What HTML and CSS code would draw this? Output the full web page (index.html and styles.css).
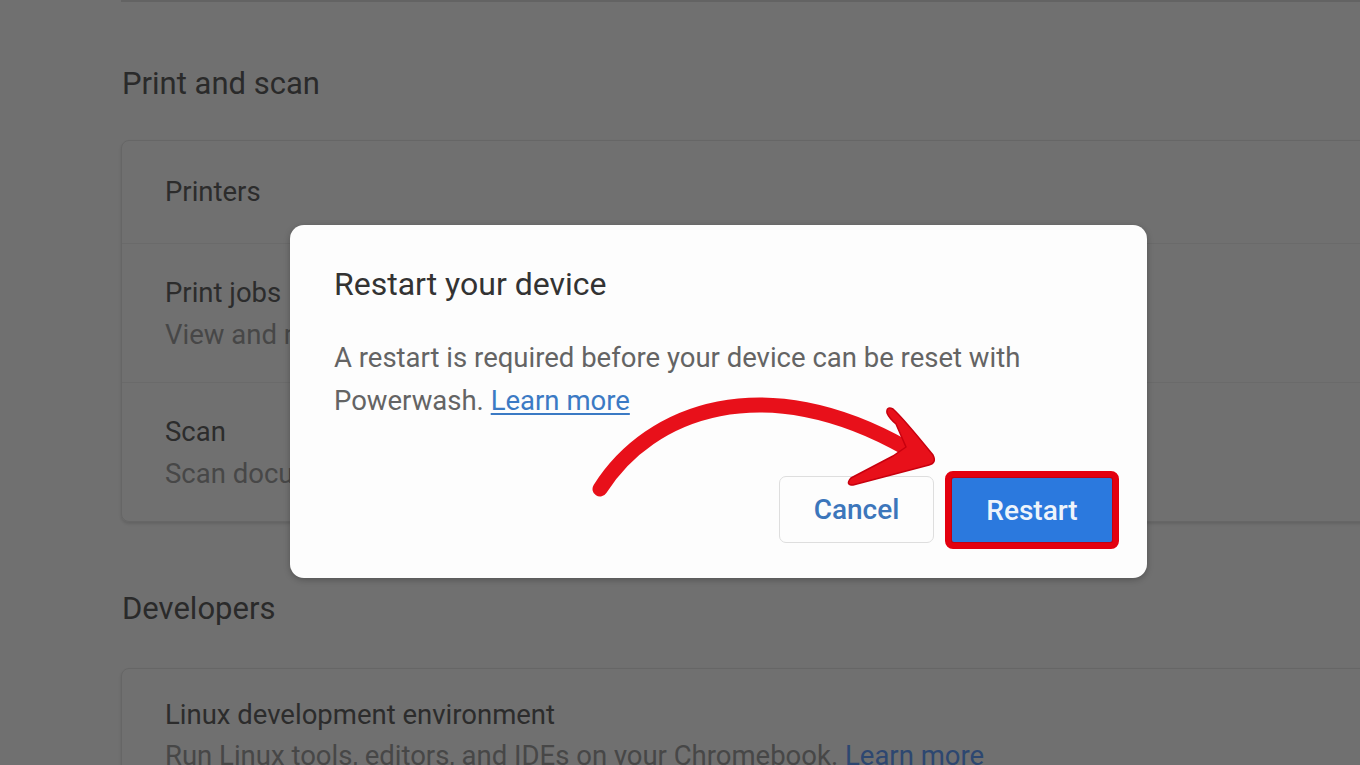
FILE: index.html
```html
<!DOCTYPE html>
<html lang="en">
<head>
<meta charset="utf-8">
<title>Restart your device</title>
<link rel="stylesheet" href="styles.css">
</head>
<body>
<main class="page">
  <div class="prev-card"></div>
  <h2 class="section-title title-print">Print and scan</h2>
  <section class="card">
    <div class="row row-first">
      <div class="row-label">Printers</div>
    </div>
    <div class="row">
      <div class="row-label">Print jobs</div>
      <div class="row-sub">View and manage print jobs</div>
    </div>
    <div class="row">
      <div class="row-label">Scan</div>
      <div class="row-sub">Scan documents and images</div>
    </div>
  </section>
  <h2 class="section-title title-dev">Developers</h2>
  <section class="card card-dev">
    <div class="row row-first">
      <div class="row-label">Linux development environment</div>
      <div class="row-sub">Run Linux tools, editors, and IDEs on your Chromebook. <span class="sub-link">Learn more</span></div>
    </div>
  </section>
</main>

<div class="dialog" role="dialog">
  <div class="dialog-title">Restart your device</div>
  <p class="dialog-body">A restart is required before your device can be reset with Powerwash. <a class="link" href="#">Learn more</a></p>
  <div class="dialog-actions">
    <button class="btn btn-cancel">Cancel</button>
    <span class="highlight"><button class="btn btn-primary">Restart</button></span>
  </div>
</div>

<svg class="arrow" width="1360" height="765" viewBox="0 0 1360 765">
  <path d="M600 489 C 650 410, 765 368, 906 448" fill="none" stroke="#e8101a" stroke-width="15" stroke-linecap="round"/>
  <path d="M887 413 Q 886 406 893 409 Q 903 418 933 455 Q 937 463 929 465 L 853 485 Q 845 485 851 478 L 893 456 L 906 447 L 896 424 Q 889 418 887 413 Z" fill="#e8101a" stroke="#c8000e" stroke-width="1.5" stroke-linejoin="round"/>
</svg>
</body>
</html>
```
FILE: styles.css
```css
* { box-sizing: border-box; }
html, body { margin: 0; padding: 0; }
body {
  width: 1360px;
  height: 765px;
  overflow: hidden;
  background: #707070;
  font-family: Roboto, "Liberation Sans", sans-serif;
  position: relative;
}
.page {
  padding-left: 121px;
  display: flex;
  flex-direction: column;
}
.prev-card {
  height: 2px;
  background: #636363;
  margin-right: -20px;
}
.section-title {
  margin: 0;
  font-weight: 400;
  font-size: 31px;
  line-height: 36px;
  color: #2a2a2a;
  padding-left: 1px;
}
.title-print { margin-top: 64px; }
.title-dev { margin-top: 69px; }
.card {
  margin-top: 38px;
  margin-right: -20px;
  border: 1px solid #666;
  border-radius: 8px;
  box-shadow: 0 2px 3px rgba(0,0,0,0.12);
  height: 382px;
  display: flex;
  flex-direction: column;
}
.card-dev { margin-top: 41px; height: 200px; }
.row {
  padding: 33px 43px 0;
  border-top: 1px solid #6a6a6a;
  height: 140px;
  white-space: nowrap;
}
.row-first { border-top: none; height: 102px; padding-top: 35px; }
.card-dev .row-first { padding-top: 30px; }
.row-label {
  font-size: 27.5px;
  line-height: 32px;
  color: #2c2c2c;
}
.row-sub {
  font-size: 27.5px;
  line-height: 32px;
  margin-top: 10px;
  color: #474747;
}
.card-dev .row-sub { margin-top: 9px; }
.sub-link { color: #2d4770; }

.dialog {
  position: absolute;
  left: 290px;
  top: 225px;
  width: 857px;
  height: 353px;
  background: #fdfdfd;
  border-radius: 14px;
  box-shadow: 0 2px 6px rgba(0,0,0,0.25);
  padding: 0 28px 29px 44px;
  display: flex;
  flex-direction: column;
}
.dialog-title {
  margin-top: 41px;
  font-size: 32px;
  line-height: 36px;
  color: #333333;
}
.dialog-body {
  margin: 34px 0 0;
  font-size: 27.5px;
  line-height: 43px;
  color: #646464;
  padding-right: 40px;
}
.link {
  color: #3b7ac4;
  text-decoration: underline;
  text-underline-offset: 3px;
}
.dialog-actions {
  margin-top: auto;
  display: flex;
  justify-content: flex-end;
  align-items: flex-end;
  gap: 11px;
}
.btn {
  font-family: Roboto, "Liberation Sans", sans-serif;
  font-weight: 500;
  font-size: 28px;
  border-radius: 7px;
  cursor: pointer;
}
.btn-cancel {
  width: 155px;
  height: 67px;
  background: #fdfdfd;
  border: 1px solid #dedede;
  color: #3c76bb;
  margin-bottom: 6px;
}
.highlight {
  display: block;
  border: 6px solid #e3000f;
  border-radius: 8px;
  padding: 1px;
  background: #c40010;
}
.btn-primary {
  display: block;
  width: 160px;
  height: 64px;
  background: #2b79de;
  border: none;
  border-radius: 2px;
  color: #eef4fb;
}
.arrow {
  position: absolute;
  left: 0;
  top: 0;
  pointer-events: none;
}
```
